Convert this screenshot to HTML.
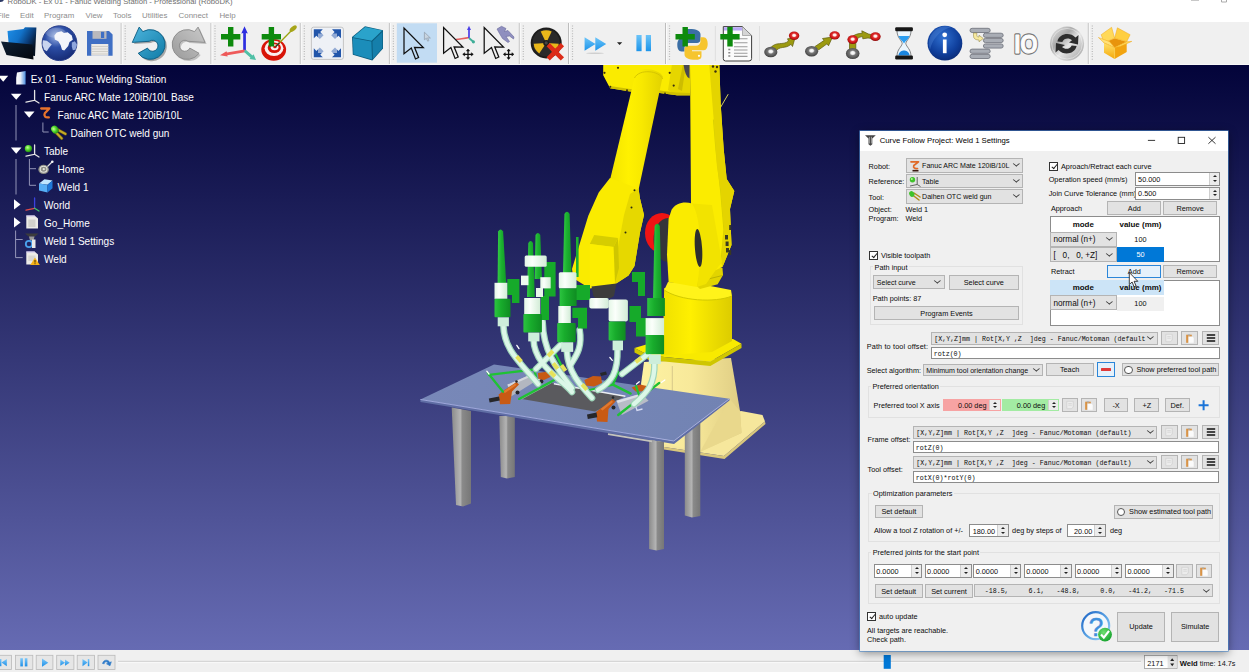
<!DOCTYPE html>
<html><head><meta charset="utf-8"><title>RoboDK - Ex 01 - Fanuc Welding Station - Professional (RoboDK)</title>
<style>
*{box-sizing:border-box;margin:0;padding:0}
html,body{width:1249px;height:672px;overflow:hidden;background:#fff}
body{font-family:"Liberation Sans",sans-serif;font-size:9px;color:#000;position:relative}
.abs{position:absolute}
#titlebar{position:absolute;left:0;top:0;width:1249px;height:23px;background:#fff}
#titletxt{position:absolute;left:7.6px;top:-3.3px;font-size:7.7px;line-height:10px;color:#6e6e6e;white-space:nowrap}
.menu{position:absolute;top:10.7px;font-size:7.9px;line-height:10px;color:#8d8d8d;white-space:nowrap}
#toolbar{position:absolute;left:0;top:22px;width:1249px;height:43px;background:#f0f0f0;border-bottom:1px solid #f8f8f8}
#view{position:absolute;left:0;top:65px;width:1249px;height:585px;background:linear-gradient(#03043a,#666bb3)}
#bottombar{position:absolute;left:0;top:649.5px;width:1249px;height:23px;background:#f0f0f0}
.tree{position:absolute;color:#fff;font-size:10.05px;white-space:nowrap;line-height:18px;height:18px;margin-top:1.2px}
#dlg{position:absolute;left:860px;top:130.5px;width:367.5px;height:520px;background:#f0f0f0;box-shadow:0 0 0 .6px #4a86c8,0 2px 9px rgba(0,0,0,.45)}
#dlgtitle{position:absolute;left:0;top:0;width:100%;height:20px;background:#fff}

#dc{position:absolute;left:0;top:0;width:0;height:0;font-size:7.3px;line-height:10px;color:#0c0c0c;white-space:nowrap}
#dc .l{position:absolute;height:10px;margin-top:.7px}
#dc .cb{position:absolute;background:#e2e2e2;border:1px solid #b4b4b4;padding-left:2.5px;padding-top:.9px;line-height:normal;display:flex;align-items:center;font-size:7.05px}
#dc .cb::after{content:"";position:absolute;right:3.6px;top:50%;width:3.7px;height:3.7px;border-right:.75px solid #3a3a3a;border-bottom:.75px solid #3a3a3a;transform:translateY(-78%) scaleY(.72) rotate(45deg)}
#dc .mono,#dc .cb.mono{font-family:"Liberation Mono",monospace;font-size:6.65px;white-space:pre}
#dc .btn{position:absolute;background:#e2e2e2;border:1px solid #b4b4b4;padding-top:.5px;display:flex;align-items:center;justify-content:center;line-height:normal}
#dc .hot{background:#e5f1fb;border-color:#2b86d9}
#dc .le{position:absolute;background:#fff;border:1px solid #8c8c8c;padding-left:2px;padding-top:1.2px;display:flex;align-items:center;line-height:normal}
#dc .sp{position:absolute;background:#fff;border:1px solid #8c8c8c;padding-left:2px;padding-top:1.2px;display:flex;align-items:center;line-height:normal}
#dc .sp::before{content:"";position:absolute;right:0;top:0;bottom:0;width:9.5px;background:#ececec;border-left:1px solid #cfcfcf}
#dc .sp i{position:absolute;right:2.6px;width:0;height:0;border-left:2.1px solid transparent;border-right:2.1px solid transparent}
#dc .sp i.u{top:calc(50% - 3.6px);border-bottom:2.6px solid #222}
#dc .sp i.d{top:calc(50% + 1px);border-top:2.6px solid #222}
#dc .gb{position:absolute;border:1px solid #e1e1e1}
#dc .gl{position:absolute;background:#f0f0f0;padding:0 1.5px;height:10px;margin-top:.8px}
#dc .ck{position:absolute;width:9px;height:9px;margin:-.3px;background:#fff;border:.8px solid #333}
#dc .ck::after{content:"";position:absolute;left:2.4px;top:.1px;width:2.4px;height:5px;border-right:.8px solid #222;border-bottom:.8px solid #222;transform:rotate(40deg)}
#dc .rd{position:absolute;width:8.4px;height:8.4px;margin:-.2px;border-radius:50%;background:#fff;border:.8px solid #555}
#dc .ib{position:absolute;background:#e2e2e2;border:1px solid #b4b4b4}
#dc .r{justify-content:flex-end}
</style></head>
<body>
<div id="titlebar"><div id="titletxt">RoboDK - Ex 01 - Fanuc Welding Station - Professional (RoboDK)</div></div>
<div id="menubar">
<span class="menu" style="left:-3px">File</span><span class="menu" style="left:20px">Edit</span><span class="menu" style="left:44px">Program</span><span class="menu" style="left:85.6px">View</span><span class="menu" style="left:113px">Tools</span><span class="menu" style="left:142px">Utilities</span><span class="menu" style="left:178.6px">Connect</span><span class="menu" style="left:219.4px">Help</span>
</div>
<div id="toolbar"></div>
<!--TB-->
<svg class="abs" style="left:0;top:0" width="1249" height="66" viewBox="0 0 1249 66">
<defs>
<linearGradient id="tFold" x1="0" y1="0" x2="1" y2=".55"><stop offset="0" stop-color="#1f8fe8"/><stop offset=".45" stop-color="#1272c8"/><stop offset=".75" stop-color="#0a3c78"/><stop offset="1" stop-color="#04101f"/></linearGradient>
<linearGradient id="tFold2" x1="0" y1="0" x2="1" y2="1"><stop offset="0" stop-color="#0f2136"/><stop offset="1" stop-color="#03070d"/></linearGradient>
<radialGradient id="tGlobe" cx=".4" cy=".3" r=".8"><stop offset="0" stop-color="#9db4e4"/><stop offset=".4" stop-color="#2c4ea6"/><stop offset="1" stop-color="#12256c"/></radialGradient>
<linearGradient id="tUndo" x1="0" y1="0" x2="1" y2="1"><stop offset="0" stop-color="#4db4dd"/><stop offset="1" stop-color="#0f7ba6"/></linearGradient>
<linearGradient id="tRedo" x1="0" y1="0" x2="1" y2="1"><stop offset="0" stop-color="#c9c9c9"/><stop offset="1" stop-color="#9a9a9a"/></linearGradient>
<linearGradient id="tFF" x1="0" y1="0" x2="0" y2="1"><stop offset="0" stop-color="#6cc4f8"/><stop offset="1" stop-color="#1c94ea"/></linearGradient>
<radialGradient id="tInfo" cx=".45" cy=".35" r=".75"><stop offset="0" stop-color="#2f6fd0"/><stop offset=".6" stop-color="#0f3f9c"/><stop offset="1" stop-color="#08246a"/></radialGradient>
<linearGradient id="tSilver" x1="0" y1="0" x2="1" y2="1"><stop offset="0" stop-color="#efefef"/><stop offset=".35" stop-color="#a9a9a9"/><stop offset=".55" stop-color="#e6e6e6"/><stop offset="1" stop-color="#9d9d9d"/></linearGradient>
<linearGradient id="tBox" x1="0" y1="0" x2="0" y2="1"><stop offset="0" stop-color="#ffe16a"/><stop offset="1" stop-color="#f4a90c"/></linearGradient>
<radialGradient id="tRed" cx=".5" cy=".45" r=".6"><stop offset="0" stop-color="#fff"/><stop offset=".22" stop-color="#fde4e0"/><stop offset=".42" stop-color="#e03030"/><stop offset=".7" stop-color="#c81414"/><stop offset="1" stop-color="#6e0808"/></radialGradient>
<radialGradient id="tGray" cx=".5" cy=".45" r=".6"><stop offset="0" stop-color="#fff"/><stop offset=".22" stop-color="#efefef"/><stop offset=".4" stop-color="#777"/><stop offset=".75" stop-color="#555"/><stop offset="1" stop-color="#333"/></radialGradient>
<g id="plus"><path d="M7 0H12.4V7H19.3V12.4H12.4V19.5H7V12.4H0V7H7Z" fill="#0d8a0d"/></g>
<g id="cur"><path d="M0 0V25.7L7.3 20L11.5 30.9L14.6 29.4L10.5 19.2L19.3 19.5Z" fill="none" stroke="#111" stroke-width="1.25" stroke-linejoin="miter"/></g>
<g id="mv" stroke="#111" stroke-width="1.3" fill="#111"><path d="M-4.6 0H4.6M0 -4.6V4.6" fill="none"/><path d="M-5.3 0L-3.3 -1.6V1.6ZM5.3 0L3.3 -1.6V1.6ZM0 -5.3L-1.6 -3.3H1.6ZM0 5.3L-1.6 3.3H1.6Z" stroke-width=".5"/></g>
<g id="sep"><path d="M0 23V64" stroke="#bdbdbd" stroke-width="1"/><path d="M1 23V64" stroke="#fbfbfb" stroke-width="1"/><path d="M4 25.5V61" stroke="#b9b9b9" stroke-width="1.2" stroke-dasharray="1 1.55"/></g>
</defs>
<!-- window buttons hints -->
<path d="M1191 .3H1199" stroke="#bbb" stroke-width="1"/><path d="M1221.5 -1H1226.5V2H1221.5Z" fill="none" stroke="#aaa" stroke-width="1"/>
<circle cx=".5" cy="-1.500" r="3.600" fill="#2d3a66"/>
<!-- selected bg -->
<rect x="396.8" y="23.3" width="40.2" height="39.4" fill="#c2dcf3"/>
<!-- separators -->
<use href="#sep" x="121.2"/><use href="#sep" x="211"/><use href="#sep" x="300.3"/><use href="#sep" x="389.4"/><use href="#sep" x="519.3"/><use href="#sep" x="568.5"/><use href="#sep" x="665.5"/><use href="#sep" x="1088.3"/>
<path d="M759.5 26V61M715.300 26V61" stroke="#dedede" stroke-width="1"/>
<!-- folder -->
<path d="M7.5 31L23.5 29L25 27.3L36.4 27.5L35 56L9.5 53Z" fill="url(#tFold)"/>
<path d="M1 41.5L32.5 44.5L33.5 59.5L6.5 55Z" fill="url(#tFold2)"/>
<!-- globe -->
<circle cx="59.5" cy="43.2" r="17.4" fill="url(#tGlobe)" stroke="#2a3f8c" stroke-width="1"/>
<path d="M54.4 35.6L56.7 32.5L61.4 31.2L64.0 33.0L67.6 32.3L71.8 35.6L72.8 39.8L69.5 42.1L68.2 46.0L64.3 50.4L62.0 49.8L60.6 45.0L58.3 41.3L54.8 39.6Z" fill="#f3f5fb"/>
<path d="M42.9 40.3L46.8 40.8L51.8 44.5L48.9 48.1L46.8 51.2L44.2 49.7L42.5 45.0Z" fill="#c9d4ee"/>
<path d="M71.8 42.4L74.9 41.3L77.0 44.5L75.4 49.7L72.8 50.2L71.8 46.5Z" fill="#8fa6dc"/>
<ellipse cx="56" cy="33" rx="10" ry="5" fill="#fff" opacity=".18"/>
<!-- floppy -->
<path d="M87 31H109L112.6 34.5V55.8H87Z" fill="#3f6fc4"/>
<path d="M92.5 31H106.5V38.8H92.5Z" fill="#b9b9bd"/><path d="M101 31.8H104.2V38H101Z" fill="#3f6fc4"/>
<path d="M91.3 44H108.3V55.8H91.3Z" fill="#eceae6"/><path d="M91.3 46.5H108.3M91.3 49H108.3M91.3 51.5H108.3M91.3 54H108.3" stroke="#c9c6c0" stroke-width=".8"/>
<!-- undo -->
<path id="undoP" d="M139.2 27.1L142.8 31.6A14.9 14.9 0 1 1 138.2 53.3L147.5 48.1A5.5 5.5 0 1 0 149.3 41.3L132.3 42.4Z" fill="none"/>
<path d="M139.2 27.1L142.8 31.6A14.9 14.9 0 1 1 138.2 53.3L147.5 48.1A5.5 5.5 0 1 0 149.3 41.3L132.3 42.4Z" fill="#6b6b6b" opacity=".55" transform="translate(1.7 1.7)"/>
<path d="M139.2 27.1L142.8 31.6A14.9 14.9 0 1 1 138.2 53.3L147.5 48.1A5.5 5.5 0 1 0 149.3 41.3L132.3 42.4Z" fill="url(#tUndo)" stroke="#0b5a80" stroke-width=".9" stroke-linejoin="round"/>
<!-- redo -->
<g transform="translate(337.3 0) scale(-1 1)"><path d="M139.2 27.1L142.8 31.6A14.9 14.9 0 1 1 138.2 53.3L147.5 48.1A5.5 5.5 0 1 0 149.3 41.3L132.3 42.4Z" fill="#777" opacity=".4" transform="translate(-1.6 1.6)"/><path d="M139.2 27.1L142.8 31.6A14.9 14.9 0 1 1 138.2 53.3L147.5 48.1A5.5 5.5 0 1 0 149.3 41.3L132.3 42.4Z" fill="url(#tRedo)" stroke="#8a8a8a" stroke-width=".9" stroke-linejoin="round"/></g>
<!-- add frame -->
<path d="M243.2 33V50.5H245.9V33L247.8 33.5L244.5 26.2L241.3 33.5Z" fill="#2d2ee0"/>
<path d="M244.6 49.6L227 52.6L226.5 51.2L220 55.2L227.6 56.6L227.3 55.2L245 52.2Z" fill="#ee5a5a"/>
<path d="M243.8 51.8L250.5 57.8L249.5 58.9L256 60L253.6 54.2L252.5 55.5L245.8 49.7Z" fill="#4fc0a6"/>
<use href="#plus" x="221" y="27"/>
<!-- add target -->
<ellipse cx="273.7" cy="49.8" rx="12.4" ry="10.9" fill="#d81408"/>
<ellipse cx="274" cy="48.3" rx="9.4" ry="7.6" fill="#fbeeee"/>
<ellipse cx="274.3" cy="47.8" rx="6.6" ry="5.2" fill="#d81408"/>
<ellipse cx="274.6" cy="47.3" rx="3.9" ry="3" fill="#fbeeee"/>
<ellipse cx="274.9" cy="47" rx="1.7" ry="1.3" fill="#d81408"/>
<path d="M275.5 46.8L291.5 30.5" stroke="#9aa30e" stroke-width="1.3"/><path d="M275.5 46.8L279.5 42.7" stroke="#333" stroke-width="1.3"/>
<ellipse cx="293.2" cy="28.6" rx="4.3" ry="2.2" fill="#a7a51a" transform="rotate(-42 293.2 28.6)"/>
<use href="#plus" x="261.7" y="27"/>
<!-- fit -->
<rect x="311.4" y="27.2" width="32" height="32.2" rx="2.2" fill="#eef1f6" stroke="#b9b9b9" stroke-width=".8"/>
<g fill="#2256aa"><path d="M313.8 29.3H322.8L320.2 31.9L323.6 35.3L319.8 39.100L316.4 35.7L313.8 38.3Z"/><path d="M341 29.3H332L334.600 31.900L331.200 35.300L335 39.100L338.400 35.700L341 38.300Z"/><path d="M313.8 57.300H322.800L320.200 54.700L323.600 51.300L319.800 47.500L316.400 50.900L313.800 48.300Z"/><path d="M341 57.300H332L334.600 54.700L331.200 51.300L335 47.500L338.400 50.900L341 48.300Z"/></g>
<rect x="318" y="33.500" width="19" height="19.500" fill="#eef1f6" opacity=".55"/>
<!-- cube -->
<path d="M352 37L365 26.200L383 30.200V48.500L372.300 60.500L352.800 54.800Z" fill="#0b5c7e"/>
<path d="M352.800 37.200L365.200 27L382.200 30.600L371.600 40.800Z" fill="#2aa3cb"/>
<path d="M352.800 38L371.400 41.600L372 59.400L353.500 54.200Z" fill="#1b8dba"/>
<path d="M372.400 41.400L382.400 31.700V48.200L372.900 59Z" fill="#157fab"/>
<!-- cursors -->
<use href="#cur" x="404" y="28.100"/>
<path d="M424.400 32.200V39.800L426.300 38.300L427.700 41.200L428.900 40.600L427.600 37.900L430.400 38Z" fill="#c9d5e0" stroke="#8c99a8" stroke-width=".7"/>
<path d="M456 39.500C460 38.500 464 38.800 469 37.500" stroke="#e46060" stroke-width="1.500" fill="none"/><path d="M469 28V38" stroke="#4a3ee8" stroke-width="1.700"/><path d="M469 25.800L467 30H471Z" fill="#4a3ee8"/><path d="M469 38L473 41.500" stroke="#3fae98" stroke-width="1.800"/><circle cx="473.400" cy="41.800" r="1.600" fill="#3fae98"/>
<use href="#cur" x="443.600" y="27.600"/>
<use href="#mv" x="468" y="54.300"/>
<path d="M497 29L501.500 26.300L506 28.500L504.500 31.500L508 30.500L514 37L513.500 39L509.500 36L506 36.500L509.500 41.500L508 42.500L502.500 38.500L499.500 33.500Z" fill="#8f8fbf" stroke="#6a6a9c" stroke-width=".6"/>
<use href="#cur" x="484.200" y="27.600"/>
<use href="#mv" x="508.600" y="54.300"/>
<!-- radiation -->
<circle cx="546.200" cy="42.900" r="15.500" fill="#1c1c1c"/><circle cx="546.200" cy="42.900" r="13.600" fill="#2a2a2a"/>
<g fill="#e9b71a"><path d="M546.200 42.900L540.700 31.600A12.600 12.600 0 0 1 551.700 31.600Z"/><path d="M546.200 42.900L533.700 43.800A12.600 12.600 0 0 0 539.200 53.400Z"/><path d="M546.200 42.900L558.700 43.800A12.600 12.600 0 0 1 553.200 53.400Z"/></g>
<circle cx="546.200" cy="42.900" r="3" fill="#1c1c1c"/><circle cx="546.200" cy="42.900" r="1.600" fill="#444"/>
<path d="M549.800 46.300L560.800 57.300M560.800 46.300L549.800 57.300" stroke="#dc2c18" stroke-width="4.600" stroke-linecap="square"/>
<!-- ff -->
<path d="M584.600 37.200L595.500 44L584.600 50.800Z M595.300 37.200L606.200 44L595.300 50.800Z" fill="url(#tFF)"/>
<ellipse cx="595" cy="53.300" rx="9" ry=".7" fill="#cfcfcf"/>
<path d="M617 42.200H622.200L619.600 45Z" fill="#222"/>
<rect x="636.400" y="35" width="5.200" height="16.200" fill="url(#tFF)"/><rect x="645.800" y="35" width="5.200" height="16.200" fill="url(#tFF)"/>
<!-- python -->
<path d="M686 27.500C680 27.500 680.500 30 680.500 33V36H690V37H678C675.500 37 674.300 40 674.300 43.500C674.300 47 675.500 50 678.500 50H681.500V46C681.500 43.500 683.500 41.500 686 41.500H694C696 41.500 697.500 40 697.500 38V33C697.500 29.500 694 27.500 686 27.500Z" fill="#3b6ea5" transform="translate(3 1.500)"/>
<path d="M695.500 59.800C701.500 59.800 701 57.300 701 54.300V51.300H691.500V50.300H703.500C706 50.300 707.200 47.300 707.200 43.800C707.200 40.300 706 37.300 703 37.300H700V41.300C700 43.800 698 45.800 695.500 45.800H687.500C685.500 45.800 684 47.300 684 49.300V54.300C684 57.800 687.500 59.800 695.500 59.800Z" fill="#f6c52f" transform="translate(.5 0)"/>
<circle cx="699" cy="55.800" r="1.100" fill="#fff"/>
<use href="#plus" x="675.500" y="27"/>
<!-- add program doc -->
<path d="M723.300 26.600H742.500L751.600 35.500V58.500Q751.600 61 749 61H725.500Q723.300 61 723.300 58.500Z" fill="#fbfbfb" stroke="#3c3c3c" stroke-width="1"/>
<path d="M742.500 26.600V35.500H751.600Z" fill="#d5d5d5" stroke="#888" stroke-width=".6"/>
<path d="M724 27.300H742L742.300 30.500H724Z" fill="#b7a8f6"/>
<path d="M734 38.800H747.500M734 42.800H747.500M734 46.800H747.500M734 50H747.500M734 53.200H747.500M734 56.400H747.500" stroke="#9c9c9c" stroke-width="1.100"/>
<path d="M728.300 49.500H730.300M728.300 52.800H730.300M728.300 56H730.300" stroke="#888" stroke-width="1.400"/>
<use href="#plus" x="720.300" y="27"/>
<!-- moveJ -->
<path d="M770 48.500C776 40.500 783 46 788.500 41L787.500 38.800L795 38L792.500 46.500L791 44.300C785 49.500 780 45 775 52Z" fill="#9c9a10" stroke="#5d5c0a" stroke-width=".7"/>
<ellipse cx="770.800" cy="52" rx="6.600" ry="5.200" fill="url(#tGray)"/><ellipse cx="794.100" cy="35.800" rx="5.200" ry="4.200" fill="url(#tRed)"/>
<!-- moveL -->
<path d="M815 46.500L824 40.500L822.500 38.500L832.500 37L828.500 45.800L827 43.800L818.500 50Z" fill="#9c9a10" stroke="#5d5c0a" stroke-width=".7"/>
<ellipse cx="811.600" cy="51.200" rx="6.600" ry="5.200" fill="url(#tGray)"/><ellipse cx="834.700" cy="35.400" rx="5.200" ry="4.200" fill="url(#tRed)"/>
<!-- moveC -->
<path d="M849.500 50V41C851 36 856 33.500 862.200 33.300L861.800 30.800L868.500 34L875 35.500V39L868 38L862.800 38.800L862.600 36.600C858.500 37 856 39 855.800 43V50Z" fill="#9c9a10" stroke="#5d5c0a" stroke-width=".7"/>
<ellipse cx="852.700" cy="53.500" rx="6.800" ry="5.600" fill="url(#tGray)"/><ellipse cx="852.700" cy="39.600" rx="5.300" ry="4.300" fill="url(#tRed)"/><ellipse cx="875.400" cy="36.600" rx="5.300" ry="4.300" fill="url(#tRed)"/>
<!-- hourglass -->
<path d="M897 30.500H911C911 38 906.300 40 905.800 43.500C906.300 47 911 49 911 56.500H897C897 49 901.700 47 902.200 43.500C901.700 40 897 38 897 30.500Z" fill="#eaf5fd" stroke="#555" stroke-width=".7"/>
<path d="M898.500 36H909.500C908.500 39.500 905 41 904 43.500C903 41 899.500 39.500 898.500 36Z" fill="#2a9df0"/>
<path d="M898.300 55.500C899 51.500 902 50.500 904 50.500C906 50.500 909 51.500 909.700 55.500Z" fill="#1a86e0"/>
<rect x="895.200" y="27.300" width="17.700" height="3.900" rx="1.200" fill="#161616"/><rect x="895.200" y="55.600" width="17.700" height="3.900" rx="1.200" fill="#161616"/>
<!-- info -->
<circle cx="944.900" cy="43.200" r="17.400" fill="url(#tInfo)"/>
<path d="M930 50A17.400 17.400 0 0 1 951 27A30 30 0 0 0 930 50Z" fill="#5a8ee0" opacity=".35"/>
<circle cx="944.700" cy="34.800" r="2.400" fill="#fff"/><rect x="942.900" y="39.500" width="3.700" height="13.700" fill="#fff"/>
<!-- subprogram -->
<g fill="#a9adb5" stroke="#6b6f78" stroke-width=".8"><rect x="970" y="28.300" width="20.200" height="4.200" rx="2.100"/><rect x="983.400" y="33.200" width="19.800" height="4.200" rx="2.100"/><rect x="983.400" y="38.400" width="19.800" height="4.200" rx="2.100"/><rect x="983.400" y="43.900" width="19.800" height="4.200" rx="2.100"/><rect x="970" y="49.100" width="20.200" height="4.200" rx="2.100"/><rect x="970" y="54.300" width="20.200" height="4.200" rx="2.100"/></g>
<path d="M973.500 33V36C973.500 39 976 40 979 40V41.800L983.300 38.500L979 35.200V37C977.500 37 976.800 36.500 976.800 35.500V33Z" fill="#f6e9a0" stroke="#8c7f3a" stroke-width=".5"/>
<!-- IO -->
<text x="1014.200" y="52.900" font-family="Liberation Sans,sans-serif" font-size="25.500" font-weight="bold" fill="#777" stroke="#777" stroke-width="3.300" stroke-linejoin="round" textLength="23.500" lengthAdjust="spacingAndGlyphs">IO</text><text x="1014.200" y="52.900" font-family="Liberation Sans,sans-serif" font-size="25.500" font-weight="bold" fill="#fcfcfc" stroke="#fcfcfc" stroke-width=".900" stroke-linejoin="round" textLength="23.500" lengthAdjust="spacingAndGlyphs">IO</text>
<!-- refresh -->
<circle cx="1067" cy="43.700" r="17.100" fill="url(#tSilver)"/>
<circle cx="1067" cy="43.700" r="15.300" fill="none" stroke="#fff" stroke-width=".8" opacity=".5"/>
<g fill="#2e2e2e"><path d="M1057.400 41.500C1059 33.500 1070 31.500 1075.500 37.500L1078.500 35L1078 44.500L1069 42.500L1072 40.300C1069 37.500 1064 38 1062.300 42Z"/><path d="M1076.600 45.900C1075 53.900 1064 55.900 1058.500 49.900L1055.500 52.400L1056 42.900L1065 44.900L1062 47.100C1065 49.900 1070 49.400 1071.700 45.400Z"/></g>
<!-- box -->
<path d="M1104 42.800L1114.600 38.200L1126.700 41.700L1114.600 47.500Z" fill="#e8940c"/>
<path d="M1104 42.800L1101.200 34.700L1111.600 27.300L1114.600 38.200Z" fill="#ffd95a" stroke="#f0a818" stroke-width=".5"/>
<path d="M1114.600 38.200L1117.400 27.800L1130.100 34.700L1126.700 41.700Z" fill="#ffcf40" stroke="#f0a818" stroke-width=".5"/>
<path d="M1104 42.800L1114.600 47.500V59L1104 52.800Z" fill="url(#tBox)"/>
<path d="M1114.600 47.500L1126.700 41.700V52L1114.600 59Z" fill="#f2a410"/>
<path d="M1114.600 47.500V59" stroke="#ffd24a" stroke-width=".6"/>
<path d="M1104 42.800L1098.400 37.500L1109.500 41.600L1114.600 47.500Z" fill="#ffe27a" stroke="#f0a818" stroke-width=".5"/>
<path d="M1126.700 41.700L1131.800 41.400L1120 46.500L1114.600 47.500Z" fill="#ffd95a" stroke="#f0a818" stroke-width=".5"/>
</svg>
<!--/TB-->
<div id="view"></div>
<!--SCENE-->
<svg class="abs" style="left:400px;top:65px" width="460" height="585" viewBox="400 65 460 585">
<defs>
<linearGradient id="sRod" x1="0" x2="1"><stop offset="0" stop-color="#34cc46"/><stop offset=".45" stop-color="#1cb230"/><stop offset="1" stop-color="#129a26"/></linearGradient>
<linearGradient id="sBody" x1="0" x2="1"><stop offset="0" stop-color="#2cc440"/><stop offset=".4" stop-color="#18ac2c"/><stop offset="1" stop-color="#0f8c22"/></linearGradient>
<linearGradient id="sWhite" x1="0" x2="1"><stop offset="0" stop-color="#e4f7e6"/><stop offset=".35" stop-color="#fbfffb"/><stop offset="1" stop-color="#d2ecd6"/></linearGradient>
<linearGradient id="sLeg" x1="0" x2="1"><stop offset="0" stop-color="#8b8b8b"/><stop offset=".45" stop-color="#b4b4b4"/><stop offset=".55" stop-color="#8a8a8a"/><stop offset="1" stop-color="#777"/></linearGradient>
<linearGradient id="sFore" x1="0" x2="1"><stop offset="0" stop-color="#f3e400"/><stop offset=".35" stop-color="#fff100"/><stop offset=".6" stop-color="#f8e900"/><stop offset="1" stop-color="#e2d200"/></linearGradient>
<linearGradient id="sCyl" x1="0" x2="1"><stop offset="0" stop-color="#efe000"/><stop offset=".4" stop-color="#fff000"/><stop offset="1" stop-color="#dccc00"/></linearGradient>
<linearGradient id="sPed" x1="0" x2="1"><stop offset="0" stop-color="#fdf2a2"/><stop offset=".5" stop-color="#f8e99a"/><stop offset="1" stop-color="#dfcd84"/></linearGradient>
<linearGradient id="sTop" x1="0" x2="1"><stop offset="0" stop-color="#7888b8"/><stop offset="1" stop-color="#7283b3"/></linearGradient>
<g id="hoseS" fill="none" stroke-linecap="round"></g>
</defs>
<!-- pedestal floor plate -->
<path d="M650 432L741 411L762.5 415L765 421.500L724 456L664 447Z" fill="#f6e79c"/>
<path d="M765 421.500L724 456L664 447L664 449.500L724.500 459L765.500 424Z" fill="#d9c77c"/>
<!-- pedestal body -->
<path d="M644 362L731 358L740 411L741.500 433L700 452L650 440L641 384Z" fill="url(#sPed)"/>
<path d="M672.300 366V392" stroke="#d8c88a" stroke-width="1"/>
<path d="M700 452L741.500 433L740 411L729.500 398.700Z" fill="#e9d88c"/>
<!-- robot base plate -->
<path d="M634.500 348L668 338L733 339L741.500 343.700L710.300 361.500L649.300 355.600Z" fill="#f8ea00"/>
<path d="M634.500 348L649.300 355.600L710.300 361.500L741.500 343.700V348L710.300 366L649 360L634.500 352.600Z" fill="#cfc600"/>
<!-- base cylinder -->
<path d="M664.200 288L732 296V341L712 352L662.700 355.600Z" fill="url(#sCyl)"/>
<path d="M664.200 290C680 301 715 303 732 296L731 290L700 284L668 282Z" fill="#fff31a"/>
<path d="M664.200 290C680 301 715 303 732 296" stroke="#d2c900" stroke-width="1" fill="none"/>
<!-- neck -->
<path d="M697 266L722.500 268L723 275L717.700 284.200L700 289L690 280Z" fill="#e2d400"/>
<path d="M700 281L722.500 275.500" stroke="#bdb400" stroke-width="1"/>
<!-- upper arm -->
<path d="M690 64L719.300 64L720.700 104.600L723.700 149.300L726.700 179L734.300 191L730 209L731.500 245L722.500 267L716 270L694 274L691 203Z" fill="#fbec00"/>
<path d="M713.500 119.500L716 150L720.700 191L724 230L721 262" stroke="#d9d000" stroke-width="1.200" fill="none"/>
<path d="M714.500 119L719 110L728.200 94.200" stroke="#eee65a" stroke-width=".9" fill="none"/>
<path d="M709.200 64L719.300 64L720.700 104.600L723.700 149.300L726.700 179L734.300 191L730 209L731.500 245L722.500 267L721 262L724 230L720.700 191L716.900 166L713.800 120.800Z" fill="#e4d400"/><g fill="#3a2f10"><circle cx="713" cy="66.500" r="1.200"/><circle cx="717" cy="67" r="1.200"/><circle cx="715.500" cy="71.500" r="1.200"/></g>
<g fill="#3a3a20"><rect x="725" y="235" width="3" height="4.500"/><rect x="725.600" y="241.500" width="3" height="4.500"/><rect x="726" y="248" width="3" height="4.500"/><rect x="729.200" y="225" width="2" height="5"/><rect x="729.200" y="250" width="2" height="5"/></g>
<!-- red motor -->
<ellipse cx="662" cy="233" rx="17" ry="20" fill="#f01414"/>
<ellipse cx="668" cy="240" rx="14.500" ry="22" fill="#35353a"/>
<!-- J2 housing -->
<path d="M671.600 209.800C676 203 684 201 692 203.500L700 230L701 266L697 287L668.600 282L667 254.400L668.600 218.700Z" fill="#faeb00"/>
<path d="M692 203.500C700 215 703 250 697 287L706 284L716.500 269L722 262L712 205Z" fill="#f2e300"/>
<ellipse cx="698.500" cy="248" rx="3.600" ry="19" fill="#2e2e2e" transform="rotate(-4 698.500 248)"/>
<!-- J3 housing -->
<path d="M603.200 64L690 64L690 95.300L676.700 95.300L659.700 93L630.200 91.400L610.100 88.300L603.200 75.200Z" fill="#faeb00"/>
<path d="M672 64L690 64V95.300L676.700 95.300L668 90Z" fill="#e6d600"/>
<path d="M678 89L683 64H686L682 91Z" fill="#cdbd00"/>
<path d="M683.500 64H689.500V78.500Q685 77 683.500 64Z" fill="#484852"/>
<path d="M610.100 88.300L630.200 91.400L659.700 93L676.700 95.300L690 95.300V93L676.500 92.500L659.700 90.500L630.200 89L610 86Z" fill="#cfc000"/>
<g fill="#3a2f10"><circle cx="618" cy="67.800" r="1.100"/><circle cx="604.500" cy="72.800" r="1.100"/><circle cx="610.300" cy="86.800" r="1"/><circle cx="627" cy="90.300" r="1"/><circle cx="669.700" cy="72.800" r="1.100"/><circle cx="673.700" cy="85.600" r="1.100"/><circle cx="665" cy="93.300" r=".9"/></g>
<!-- forearm -->
<path d="M635.900 72C640 66.500 659 69 662.700 76.400L638.500 190L610 180Z" fill="url(#sFore)"/>
<path d="M634.500 78C639 68.500 659.500 70.500 662.700 79" stroke="#d6c600" stroke-width="1" fill="none"/>
<!-- wrist housing -->
<path d="M610 178L638.500 188.500L640 198.500L644 215L640 232.600L634.500 266L628.500 275.500L615 284.200L589.800 288.600L573.400 278.200L572 269L588.300 215.700L598.700 192.400Z" fill="#faeb00"/>
<path d="M638.500 188.500L640 198.500L644 215L640 232.600L634.500 266L628.500 275.500L615 284.200L618 247L624 215L630 194Z" fill="#e6d800"/>
<path d="M594.200 235L618 238L613.600 247L589.800 244Z" fill="#d6cd00"/>
<path d="M589.800 244L613.600 247L615 283L589.800 287Z" fill="#fcee00"/>
<path d="M613.600 247L618 238L619 268L615 283Z" fill="#cfc600"/>
<g fill="#2b2b10"><circle cx="634.500" cy="190.300" r="1"/><circle cx="631.500" cy="207.500" r="1"/><circle cx="625.500" cy="232.500" r="1"/></g>
<!-- flange -->
<path d="M591.500 286.500L616.500 283.500L614 296L611 298L596 298.500L593.500 296.500Z" fill="#3c3c3c"/>
<!-- table legs back -->
<path d="M499.300 416H514.800V477L507 478.500L500.800 477Z" fill="url(#sLeg)"/>
<path d="M684.800 430L700.300 423V516L692 517.500L684.800 515.400Z" fill="url(#sLeg)"/>
<!-- table top -->
<path d="M420.400 399.500L494 364.500L729.500 398.700L673.800 441Z" fill="url(#sTop)"/>
<path d="M420.400 399.500L673.800 441L729.500 398.700V400.500L674 444L420.400 402Z" fill="#5f6da4"/>
<path d="M420.400 399.500L673.800 441L729.500 398.700" stroke="#a6afe2" stroke-width=".9" fill="none"/>
<!-- legs front -->
<path d="M451.700 407.500L471 411V503.500L463 506.500L456 505Z" fill="url(#sLeg)"/>
<path d="M649.100 440L664 442V549L656.500 550.500L649.100 549Z" fill="url(#sLeg)"/>
<path d="M608 434.200L652 441.300" stroke="#c4c4bc" stroke-width="1.700"/>
<!-- workpiece -->
<path d="M507.500 384.600L531.600 374L534.300 382L510.200 397Z" fill="#b3b7c0"/>
<path d="M507.500 384.600L531.600 374L532.300 376L508.200 386.800Z" fill="#d4d7de"/>
<path d="M521.800 399L551.300 382.900L625.400 396.300L595 411.400Z" fill="#5a5a5e"/>
<path d="M553.900 383.800L625.400 396.300" stroke="#eceef4" stroke-width="1.500"/>
<path d="M616.400 400.700L641.400 393.600L648.600 400.700L621.800 415Z" fill="#b8bcc6"/>
<path d="M616.400 400.700L641.400 393.600L643 395.200L618 403Z" fill="#dcdfe6"/>
<path d="M521.800 399L551.300 382.900" stroke="#8fd08f" stroke-width=".8"/>
<!-- clamps -->
<g fill="#c85a14"><path d="M498.600 394.500L506 389L516.500 382L519 384.500L512 391.500L510.200 404L500 404.300Z"/><path d="M537.900 373L548 371.500L550.400 377L544 380L538.500 379.500Z"/><path d="M584.300 380L593 376L601 376.500L602 383L594 386.400L586 385.500Z"/><path d="M596 412L604 406L612.500 399L615.500 401.500L608.500 409L607.500 422L597 421.500Z"/><path d="M631.600 387.500L640 384.600L646.800 386L645 391L636 391.800Z"/></g>
<g fill="#e07a30"><path d="M503 391.500L515 383.500L516.500 385L505 393Z"/><path d="M600.500 409L611.500 400.500L613 402L602.500 410.500Z"/></g>
<g fill="#26262a"><path d="M488.800 398.500L499 396.600L499.800 400.600L489.600 402.400Z"/><path d="M587 414.500L596.500 412.500L597.300 417.300L587.800 419Z"/><circle cx="517.500" cy="392.500" r="2"/><circle cx="541.500" cy="381.500" r="1.900"/><circle cx="613.500" cy="407.500" r="2"/><path d="M600 373L606 371.500L607 374.500L601 376Z"/><circle cx="516.500" cy="381.500" r="1.300"/><circle cx="613" cy="397.500" r="1.300"/></g>
<!-- green path lines -->
<g stroke="#1fc234" stroke-width="2.300" fill="none" stroke-linecap="round" stroke-linejoin="round"><path d="M487.900 373L503 391.800"/><path d="M489 374.800L534.300 369.500L537 381"/><path d="M519.100 398.900L553.900 380.200"/><path d="M555.700 354.300L562.900 368.600"/><path d="M589.600 390L612.900 384.600L630.700 393.600"/><path d="M612.900 384.600L618.200 372"/><path d="M618.200 415L659.300 382.900"/><path d="M636 386L640 398"/></g>
<g stroke="#fff" stroke-width="1.300" stroke-linecap="round"><path d="M486.800 371.200L489 374"/><path d="M516.800 345.400L519 348.600"/><path d="M536.500 381.500L539 379.500"/><path d="M609.900 357.500L612.300 360.300"/><path d="M636.500 384L639.300 381.800"/><path d="M661.300 382.500L664.800 380"/></g>
<path d="M635.500 405.500L637 410.500L642.500 409" stroke="#d5daf2" stroke-width="1.300" fill="none"/>
<!-- hoses -->
<g fill="none" stroke-linecap="round">
<g stroke="#9ed4b8" stroke-width="6.600"><path d="M503.300 325C504 350 520 362 538 384"/><path d="M533.500 339C534 365 560 378 572 392"/><path d="M542.700 322C543 350 556 368 572 388"/><path d="M579.700 330C583 350 574 358 570 366"/><path d="M566.800 351C568 372 580 385 592 398"/><path d="M617.500 349C618 372 612 382 598 390"/><path d="M654.400 362C655 384 648 392 634 404"/><path d="M560.400 345L536 369"/><path d="M648 354L622 374"/></g>
<g stroke="#dcf7e8" stroke-width="4.300"><path d="M503.300 325C504 350 520 362 538 384"/><path d="M533.500 339C534 365 560 378 572 392"/><path d="M542.700 322C543 350 556 368 572 388"/><path d="M579.700 330C583 350 574 358 570 366"/><path d="M566.800 351C568 372 580 385 592 398"/><path d="M617.500 349C618 372 612 382 598 390"/><path d="M654.400 362C655 384 648 392 634 404"/><path d="M560.400 345L536 369"/><path d="M648 354L622 374"/></g>
</g>
<g fill="#e6e25a"><rect x="515.500" y="357" width="7" height="4" transform="rotate(48 519 359)"/><rect x="547" y="351.500" width="7" height="4" transform="rotate(-45 550.500 353.500)"/><rect x="552" y="364" width="7" height="4" transform="rotate(50 555.500 366)"/><rect x="549" y="372" width="7" height="4" transform="rotate(45 552.500 374)"/><rect x="560" y="366" width="7" height="4" transform="rotate(55 563.500 368)"/><rect x="581" y="385" width="7" height="4" transform="rotate(48 584.500 387)"/><rect x="635" y="358" width="7" height="4" transform="rotate(-38 638.500 360)"/></g>
<!-- brackets -->
<g fill="#16aa2a"><path d="M507.300 279H519.400V303H512V295H507.300Z"/><path d="M544.300 262H555.600V296.500H549V320H541V296H544.300Z"/><path d="M572.400 307.700H587V328.600H578V318H572.400Z"/><path d="M629.500 306H641V318H647.200V336.600H636V322H629.500Z"/><path d="M575 285H590V300H575Z"/><path d="M632 272H645V296H638V282H632Z"/></g>
<!-- guns -->
<!-- R5 thin behind -->
<rect x="576" y="237" width="2.600" height="40" fill="#1cb230"/>
<!-- G1 -->
<path d="M498.100 231.500Q500.600 227.500 503.100 231.500L506.200 283H497.600Z" fill="url(#sRod)"/>
<rect x="494.500" y="282.800" width="12.800" height="16.100" fill="url(#sWhite)"/>
<rect x="494.500" y="298.800" width="16" height="18.500" rx="1" fill="url(#sBody)"/>
<rect x="497.700" y="317.300" width="11.200" height="9" fill="#cdeedb"/>
<!-- G3/R3 upper -->
<path d="M535.500 235Q537.900 231 540.300 235L542 279H534.600Z" fill="url(#sRod)"/>
<path d="M528.300 243Q530.600 239 533 243L534.800 297H527Z" fill="url(#sRod)"/>
<rect x="524.700" y="255.500" width="22" height="11.200" rx="1.500" fill="url(#sWhite)"/>
<rect x="521" y="275.600" width="7.500" height="9.600" fill="#eefaf0"/>
<rect x="540.300" y="277.200" width="10.400" height="11.200" fill="url(#sWhite)"/>
<rect x="536" y="288" width="7" height="9" fill="#e8f8ea"/>
<!-- G2 -->
<rect x="524.200" y="298" width="16.100" height="16.100" fill="url(#sWhite)"/>
<rect x="523.400" y="314.100" width="18.500" height="18.500" rx="1" fill="url(#sBody)"/>
<rect x="528.200" y="332.600" width="11.300" height="8.800" fill="#cdeedb"/>
<!-- G4/R4 -->
<path d="M564.400 214Q567 209.500 569.600 214L571.500 273H563Z" fill="url(#sRod)"/>
<rect x="558.800" y="272.300" width="17.700" height="16.100" rx="1.500" fill="url(#sWhite)"/>
<rect x="559.600" y="288.400" width="17" height="17.600" fill="url(#sBody)"/>
<rect x="558.300" y="306" width="12.500" height="17" fill="url(#sWhite)"/>
<rect x="557.200" y="323" width="18.500" height="19.300" rx="1" fill="url(#sBody)"/>
<rect x="561.200" y="342.300" width="12" height="9.600" fill="#cdeedb"/>
<!-- G5 robot gun -->
<rect x="589.300" y="298" width="19.500" height="10.500" rx="2" fill="url(#sWhite)"/>
<rect x="608.600" y="299.600" width="19.300" height="21.800" rx="2" fill="url(#sWhite)"/>
<rect x="608.600" y="321.400" width="17" height="19.200" rx="1" fill="url(#sBody)"/>
<rect x="612.600" y="340.600" width="10.400" height="9.700" fill="#cdeedb"/>
<!-- G6 right -->
<path d="M654.600 226Q657.200 221.500 659.800 226L661.800 300H653Z" fill="url(#sRod)"/>
<rect x="647.200" y="298" width="17.700" height="18" fill="url(#sBody)"/>
<rect x="645.600" y="318.100" width="18.500" height="17" fill="url(#sWhite)"/>
<rect x="645.600" y="335" width="18.500" height="19.300" rx="1" fill="url(#sBody)"/>
<rect x="648.800" y="354.300" width="12" height="9.700" fill="#cdeedb"/>
</svg>
<!--/SCENE-->
<!--TREE-->
<svg class="abs" style="left:0;top:65px" width="230" height="210" viewBox="0 65 230 210">
<defs>
<linearGradient id="gdoc" x1="0" x2="1"><stop offset="0" stop-color="#fff"/><stop offset=".45" stop-color="#e8eef8"/><stop offset="1" stop-color="#4d8fe0"/></linearGradient>
<linearGradient id="gcube" x1="0" y1="0" x2="1" y2="1"><stop offset="0" stop-color="#8fd0ff"/><stop offset="1" stop-color="#1c6fd6"/></linearGradient>
<radialGradient id="gball" cx=".4" cy=".35" r=".7"><stop offset="0" stop-color="#c8ff9a"/><stop offset=".5" stop-color="#4fd628"/><stop offset="1" stop-color="#1d7d10"/></radialGradient>
</defs>
<g stroke="#a9abc9" stroke-width="1" fill="none" opacity=".85">
<path d="M16 105V140.5"/><path d="M42.9 122.5V132H48.7"/>
<path d="M16 159V194.5"/><path d="M29.4 159V185.3H36M29.4 168.7H36"/>
<path d="M15.6 230.5V257.6H22.7M15.6 239.5H22.7"/>
</g>
<g fill="#fff">
<path d="M-1.8 75.8H8.2L3.2 81.8Z"/>
<path d="M10.9 93.7H21.5L16.2 99.8Z"/>
<path d="M23.9 111.6H34.5L29.2 117.7Z"/>
<path d="M10.9 147.6H21.5L16.2 153.7Z"/>
<path d="M14 199.3L20.6 204.4L14 209.5Z"/>
<path d="M14 217.3L20.6 222.4L14 227.5Z"/>
</g>
<!-- station icon -->
<path d="M17 72.5L25.6 71V84.5H16.2V78Z" fill="url(#gdoc)"/>
<!-- frame icon white -->
<g stroke="#e6e6e6" stroke-width="1.3" fill="none" stroke-linecap="round"><path d="M34.6 90.5V100.3L26 102.2M34.6 100.3L39 103"/></g>
<!-- robot icon orange -->
<g stroke="#e8732c" stroke-width="2.300" fill="none" stroke-linecap="round" stroke-linejoin="round"><path d="M41.200 108.500H49.300L44.800 113.300C43.600 115.800 45.200 117.800 48.800 117.300"/></g>

<!-- tool icon -->
<g><path d="M56 132.500L61.700 138.400" stroke="#6a5a10" stroke-width="3.200" stroke-linecap="round"/><path d="M58 129.800L65.400 133.900" stroke="#6a5a10" stroke-width="3.200" stroke-linecap="round"/><path d="M56 132.500L61.700 138.400" stroke="#c4aa28" stroke-width="2" stroke-linecap="round"/><path d="M58 129.800L65.400 133.900" stroke="#c4aa28" stroke-width="2" stroke-linecap="round"/><ellipse cx="54.900" cy="129.600" rx="3.500" ry="4.200" fill="url(#gball)" transform="rotate(-35 54.900 129.600)"/></g>
<!-- table frame icon -->
<g stroke="#e6e6e6" stroke-width="1.3" fill="none" stroke-linecap="round"><path d="M34.6 145V154.3L26 156.2M34.6 154.3L39 157"/></g>
<circle cx="28.4" cy="148.6" r="3.6" fill="url(#gball)"/>
<!-- target icon home -->
<g><path d="M46 168L52.5 161.5" stroke="#ddd" stroke-width="1.2"/><circle cx="52.3" cy="161.8" r="1.3" fill="#f4f4f4"/><ellipse cx="43.6" cy="169.4" rx="5.3" ry="4.6" fill="#8d8d86"/><ellipse cx="43.6" cy="169.2" rx="3.4" ry="3" fill="none" stroke="#e3e3dc" stroke-width="1.1"/><circle cx="43.8" cy="169.2" r="1.1" fill="#e3e3dc"/></g>
<!-- cube icon -->
<g><path d="M39 183.5L44.5 179.3L52.5 180.5L47.5 184.8Z" fill="#bfe6ff"/><path d="M39 183.5L47.5 184.8V192.6L39 190.6Z" fill="#56aef5"/><path d="M47.5 184.8L52.5 180.5V188.3L47.5 192.6Z" fill="#1f78d8"/></g>
<!-- world axes -->
<g stroke-width="1.3" fill="none" stroke-linecap="round"><path d="M34.6 198V208.3" stroke="#3a41e0"/><path d="M34.6 208.3L26 210.2" stroke="#e04a4a"/><path d="M34.6 208.3L39 211" stroke="#3fc46a"/></g>
<!-- Go_Home doc -->
<path d="M26.3 215.4H34.5L38 218.6V228.6H26.3Z" fill="#ecebe7"/><path d="M26.3 215.4H34.5L35.6 216.5H26.3Z" fill="#c9bff0"/><path d="M28.3 219.5H35.5V227H28.3Z" fill="#d2d1cc"/>
<!-- settings icon -->
<g><path d="M25 233.5H38.5L35 236.5H28.5Z" fill="#3c3c3c"/><path d="M29 236.5H34.5L33.5 240.5H30Z" fill="#9a9a9a"/><circle cx="29" cy="244" r="3.2" fill="none" stroke="#4aa3ee" stroke-width="1.8"/><path d="M32 239.5H35.5V248H32Z" fill="#e9e9e9"/></g>
<!-- Weld doc + warning -->
<path d="M26.3 251.4H34.5L38 254.6V264.6H26.3Z" fill="#ecebe7"/><path d="M26.3 251.4H34.5L35.6 252.5H26.3Z" fill="#c9bff0"/><path d="M28.3 255.5H35.5V261H28.3Z" fill="#d8d7d2"/>
<path d="M35 257.5L39.8 265H30.2Z" fill="#f5b21a"/><path d="M35 260V262.6M35 263.3V264.2" stroke="#3a2a00" stroke-width="1"/>
</svg>
<div class="tree" style="left:30.8px;top:69.8px">Ex 01 - Fanuc Welding Station</div>
<div class="tree" style="left:44px;top:87.8px">Fanuc ARC Mate 120iB/10L Base</div>
<div class="tree" style="left:57.5px;top:105.8px">Fanuc ARC Mate 120iB/10L</div>
<div class="tree" style="left:70.6px;top:123.8px">Daihen OTC weld gun</div>
<div class="tree" style="left:44px;top:141.8px">Table</div>
<div class="tree" style="left:57.5px;top:159.8px">Home</div>
<div class="tree" style="left:57.5px;top:177.8px">Weld 1</div>
<div class="tree" style="left:44px;top:195.8px">World</div>
<div class="tree" style="left:44px;top:213.8px">Go_Home</div>
<div class="tree" style="left:44px;top:231.8px">Weld 1 Settings</div>
<div class="tree" style="left:44px;top:249.8px">Weld</div>
<!--/TREE-->
<div id="bottombar"></div>
<!--BOTTOM-->
<svg class="abs" style="left:0;top:650px" width="1249" height="22" viewBox="0 650 1249 22">
<defs><linearGradient id="bB" x1="0" y1="0" x2="0" y2="1"><stop offset="0" stop-color="#7cc8fa"/><stop offset="1" stop-color="#1e8fe6"/></linearGradient></defs>
<g fill="#e6e6e6" stroke="#b9b9b9" stroke-width=".8"><rect x="-6" y="655.300" width="17.400" height="14.200"/><rect x="15.400" y="655.300" width="17.400" height="14.200"/><rect x="36.200" y="655.300" width="16.700" height="14.200"/><rect x="56.700" y="655.300" width="17.200" height="14.200"/><rect x="77.200" y="655.300" width="17.300" height="14.200"/><rect x="98" y="655.300" width="17" height="14.200"/></g>
<g fill="url(#bB)"><path d="M6.800 659L1.500 662.600L6.800 666.200Z"/><rect x="0" y="659" width="1.400" height="7.200"/>
<rect x="20.300" y="658.200" width="2.600" height="8.200"/><rect x="24.800" y="658.200" width="2.600" height="8.200"/>
<path d="M42 658.600L48.300 662.700L42 666.800Z"/>
<path d="M60.300 659.600L65 662.700L60.300 665.800ZM65 659.600L69.700 662.700L65 665.800Z"/>
<path d="M82.500 659L87.600 662.600L82.500 666.200Z"/><rect x="87.800" y="659" width="1.500" height="7.200"/></g>
<path d="M102.500 663.500C103.500 659.500 108 659 109.800 662.500L111.300 661.800L110 665.800L106.500 663.800L108 663.200C107 661.200 104.500 661.500 104.200 663.800Z" fill="#2a78c8" stroke="#2a78c8" stroke-width=".6"/>
<path d="M118 661.500H1141" stroke="#d6d6d6" stroke-width="1.300"/><path d="M118 662.600H1141" stroke="#fcfcfc" stroke-width=".8"/>
<rect x="883.700" y="655" width="7.100" height="13.800" fill="#0078d7"/>
<rect x="1144.500" y="655.500" width="32.500" height="13.100" fill="#fff" stroke="#9a9a9a" stroke-width=".8"/>
<rect x="1167.600" y="656" width="9" height="12.200" fill="#e4e4e4"/>
<path d="M1170.200 661L1172.200 658.300L1174.200 661ZM1170.200 663.500L1172.200 666.200L1174.200 663.500Z" fill="#222"/>
</svg>
<div class="abs" style="left:1147.300px;top:658.600px;font-size:7.300px;line-height:10px;color:#111">2171</div>
<div class="abs" style="left:1179.700px;top:658.600px;font-size:7.300px;line-height:10px;color:#111;white-space:nowrap"><b style="font-size:7.600px">Weld</b> time: 14.7s</div>
<!--/BOTTOM-->
<div id="dlg"><div id="dlgtitle"></div>
</div>
<!--DLGC-->
<div id="dc">
<!-- title -->
<svg class="abs" style="left:864px;top:134px" width="13" height="13" viewBox="864 134 13 13"><path d="M865 135.300H875.800L872.300 138.600V144.300L870.400 145.700L868.500 144.300V138.600Z" fill="#444"/><path d="M869.400 136.800V143.500M871.400 136.800V143.500" stroke="#ddd" stroke-width=".6"/></svg>
<div class="l" style="left:879.700px;top:135.600px;font-size:7.750px;color:#000">Curve Follow Project: Weld 1 Settings</div>
<svg class="abs" style="left:1140px;top:132px" width="84" height="16" viewBox="1140 132 84 16"><path d="M1147.900 140.400H1155.100" stroke="#222" stroke-width=".9"/><rect x="1178.200" y="137.300" width="6.400" height="6.200" fill="none" stroke="#222" stroke-width=".9"/><path d="M1208.400 137.200L1215.500 143.700M1215.500 137.200L1208.400 143.700" stroke="#222" stroke-width=".9"/></svg>
<!-- left column -->
<div class="l" style="left:868.600px;top:161.300px">Robot:</div>
<div class="l" style="left:868.600px;top:176.800px">Reference:</div>
<div class="l" style="left:868.600px;top:191.900px">Tool:</div>
<div class="l" style="left:868.600px;top:204.200px">Object:</div><div class="l" style="left:905.500px;top:204.200px">Weld 1</div>
<div class="l" style="left:868.600px;top:213.400px">Program:</div><div class="l" style="left:905.500px;top:213.400px">Weld</div>
<div class="cb" style="left:906.100px;top:158.200px;width:117px;height:14.400px;padding-left:15px">Fanuc ARC Mate 120iB/10L</div>
<div class="cb" style="left:906.100px;top:174.200px;width:117px;height:14.200px;padding-left:15px">Table</div>
<div class="cb" style="left:906.100px;top:189.300px;width:117px;height:14.400px;padding-left:15px">Daihen OTC weld gun</div>
<svg class="abs" style="left:908px;top:159px" width="14" height="46" viewBox="908 159 14 46">
<g stroke="#e06a28" stroke-width="1.700" fill="none" stroke-linecap="round" stroke-linejoin="round"><path d="M911 161.800H918.500L913.800 165.500C913 167.500 914.500 169 917.500 168.500"/></g><path d="M912.500 170.700H918.500" stroke="#3a1a10" stroke-width="1.600"/>
<circle cx="912.500" cy="179.800" r="2.700" fill="#3fc22a"/><circle cx="911.800" cy="179" r="1" fill="#b8f59a"/><path d="M917.200 177V184.500L910 186M917.200 184.500L920.500 186.500" stroke="#555" stroke-width=".9" fill="none"/>
<path d="M912.500 195L919 200" stroke="#b08a1a" stroke-width="1.500" stroke-linecap="round"/><path d="M914 193L920 197" stroke="#b08a1a" stroke-width="1.500" stroke-linecap="round"/><ellipse cx="911.800" cy="194" rx="2.400" ry="3" fill="#3fc22a" transform="rotate(-35 911.800 194)"/>
</svg>
<div class="ck" style="left:869.500px;top:251.500px"></div><div class="l" style="left:880.900px;top:250.600px">Visible toolpath</div>
<div class="gb" style="left:870.100px;top:266.300px;width:153px;height:59px"></div><div class="gl" style="left:873.100px;top:262px">Path input</div>
<div class="cb" style="left:873.300px;top:275.200px;width:71.300px;height:14.200px">Select curve</div>
<div class="btn" style="left:948.700px;top:274.800px;width:70.200px;height:14.800px">Select curve</div>
<div class="l" style="left:872.700px;top:293.200px">Path points: 87</div>
<div class="btn" style="left:874.200px;top:306px;width:144.500px;height:14.200px">Program Events</div>
<!-- right column -->
<div class="ck" style="left:1049.600px;top:161.900px"></div><div class="l" style="left:1061px;top:161.300px">Aproach/Retract each curve</div>
<div class="l" style="left:1048.700px;top:174.600px">Operation speed (mm/s)</div>
<div class="sp" style="left:1135.100px;top:172.300px;width:85px;height:13.400px">50.000<i class="u"></i><i class="d"></i></div>
<div class="l" style="left:1048.700px;top:188.500px">Join Curve Tolerance (mm)</div>
<div class="sp" style="left:1135.100px;top:186.600px;width:85px;height:13.200px">0.500<i class="u"></i><i class="d"></i></div>
<div class="l" style="left:1050.900px;top:203.300px">Approach</div>
<div class="btn" style="left:1107.400px;top:201.300px;width:53.900px;height:13.400px">Add</div>
<div class="btn" style="left:1163.200px;top:201.300px;width:53.900px;height:13.400px">Remove</div>
<div class="le" style="left:1049.600px;top:216.200px;width:170.400px;height:46px;padding:0"></div>
<div class="l" style="left:1050.300px;top:219.400px;width:66px;text-align:center;font-weight:bold;font-size:7.950px">mode</div>
<div class="l" style="left:1117.100px;top:219.400px;width:46.700px;text-align:center;font-weight:bold;font-size:7.950px">value (mm)</div>
<div class="cb" style="left:1050.300px;top:231.600px;width:66.300px;height:15px;font-size:8.200px;padding-left:2.200px">normal (n+)</div>
<div class="l" style="left:1117.100px;top:234.500px;width:46.700px;text-align:center">100</div>
<div class="cb" style="left:1050.300px;top:247.400px;width:66.300px;height:14.600px;white-space:pre;font-size:8.200px;padding-left:2.200px">[   0,   0, +Z]</div>
<div class="l" style="left:1117.100px;top:246.800px;width:46.700px;height:14.900px;line-height:15.500px;margin-top:0;text-align:center;background:#0078d7;color:#fff">50</div>
<div class="l" style="left:1050.900px;top:266.700px">Retract</div>
<div class="btn hot" style="left:1107.400px;top:264.700px;width:53.900px;height:13.600px">Add</div>
<div class="btn" style="left:1163.200px;top:264.700px;width:53.900px;height:13.600px">Remove</div>
<div class="le" style="left:1049.600px;top:279.600px;width:170.400px;height:46.500px;padding:0"></div>
<div class="abs" style="left:1050.300px;top:280.300px;width:113.500px;height:14.400px;background:#cce4f7"></div>
<div class="l" style="left:1050.300px;top:282.400px;width:66px;text-align:center;font-weight:bold;font-size:7.950px">mode</div>
<div class="l" style="left:1117.100px;top:282.400px;width:46.700px;text-align:center;font-weight:bold;font-size:7.950px">value (mm)</div>
<div class="cb" style="left:1050.300px;top:295.400px;width:66.300px;height:14.400px;font-size:8.200px;padding-left:2.200px">normal (n+)</div>
<div class="l" style="left:1117.100px;top:296px;width:46.700px;height:13.900px;line-height:13.900px;text-align:center;background:#f0f0f0">100</div>
<svg class="abs" style="left:1127px;top:271px" width="14" height="20" viewBox="1127 271 14 20"><path d="M1129.300 272.500V284.500L1132.100 282L1134.100 286.800L1136.100 286L1134.100 281.300H1137.800Z" fill="#fff" stroke="#111" stroke-width=".8" stroke-linejoin="round"/></svg>
<!-- path to tool offset -->
<div class="l" style="left:866.700px;top:341.100px;letter-spacing:.14px">Path to tool offset:</div>
<div class="cb mono" style="left:930.700px;top:331.900px;width:227px;height:12.800px">[X,Y,Z]mm | Rot[X,Y ,Z  ]deg - Fanuc/Motoman (default</div>
<div class="le mono" style="left:930.700px;top:346.500px;width:289.300px;height:12.900px">rotz(0)</div>
<div class="l" style="left:866.700px;top:365.100px">Select algorithm:</div>
<div class="cb" style="left:922.800px;top:363.500px;width:120px;height:12.900px">Minimum tool orientation change</div>
<div class="btn" style="left:1045.500px;top:362.900px;width:48.300px;height:13.200px">Teach</div>
<div class="btn hot" style="left:1097.300px;top:362.200px;width:17.600px;height:14.800px"><span style="display:block;width:9.500px;height:3px;background:#e03a3a;border-radius:.5px"></span></div>
<div class="btn" style="left:1121.600px;top:362.900px;width:97.100px;height:13.500px;justify-content:flex-start;padding-left:13.800px">Show preferred tool path</div><div class="rd" style="left:1124.500px;top:366.100px"></div>
<div class="gb" style="left:867.600px;top:386.200px;width:352.400px;height:32.200px"></div><div class="gl" style="left:870.900px;top:381.200px">Preferred orientation</div>
<div class="l" style="left:873.600px;top:400.800px">Preferred tool X axis</div>
<div class="sp r" style="left:943.300px;top:399.100px;width:57.400px;height:12.200px;background:#f7a3a3;border-color:#f7a3a3;padding-right:13.200px">0.00 deg<i class="u"></i><i class="d"></i></div>
<div class="sp r" style="left:1002px;top:399.100px;width:57.400px;height:12.200px;background:#a3eba3;border-color:#a3eba3;padding-right:13.200px">0.00 deg<i class="u"></i><i class="d"></i></div>
<div class="btn" style="left:1103.600px;top:398.200px;width:24.900px;height:13.600px">-X</div>
<div class="btn" style="left:1134.200px;top:398.200px;width:25.200px;height:13.600px">+Z</div>
<div class="btn" style="left:1164.800px;top:398.200px;width:24.900px;height:13.600px">Def.</div>
<svg class="abs" style="left:1197px;top:399px" width="13" height="13" viewBox="1197 399 13 13"><path d="M1203.600 400.200V410.200M1198.600 405.200H1208.600" stroke="#1b74d8" stroke-width="2"/></svg>
<div class="l" style="left:867.600px;top:434.800px">Frame offset:</div>
<div class="cb mono" style="left:912.700px;top:426px;width:244.500px;height:12.700px">[X,Y,Z]mm | Rot[X,Y ,Z  ]deg - Fanuc/Motoman (default)</div>
<div class="le mono" style="left:912.700px;top:440.800px;width:306.700px;height:12.700px">rotZ(0)</div>
<div class="l" style="left:867.600px;top:464.800px">Tool offset:</div>
<div class="cb mono" style="left:912.700px;top:455.900px;width:244.500px;height:12.900px">[X,Y,Z]mm | Rot[X,Y ,Z  ]deg - Fanuc/Motoman (default)</div>
<div class="le mono" style="left:912.700px;top:470.700px;width:306.700px;height:12.700px">rotX(0)*rotY(0)</div>
<!-- optimization -->
<div class="gb" style="left:867.600px;top:493.200px;width:352.400px;height:49px"></div><div class="gl" style="left:871.500px;top:488.100px">Optimization parameters</div>
<div class="btn" style="left:874.600px;top:504.600px;width:48.500px;height:13.900px">Set default</div>
<div class="btn" style="left:1114.300px;top:504.600px;width:98.400px;height:14.200px;justify-content:flex-start;padding-left:13.800px">Show estimated tool path</div><div class="rd" style="left:1117.200px;top:507.900px"></div>
<div class="l" style="left:873.900px;top:525.800px">Allow a tool Z rotation of +/-</div>
<div class="sp" style="left:969.200px;top:524.200px;width:39.400px;height:12.900px;padding-left:2.500px">180.00<i class="u"></i><i class="d"></i></div>
<div class="l" style="left:1012.100px;top:525.800px">deg by steps of</div>
<div class="sp" style="left:1067px;top:524.200px;width:38.800px;height:12.900px;padding-left:6px">20.00<i class="u"></i><i class="d"></i></div>
<div class="l" style="left:1109.900px;top:525.800px">deg</div>
<!-- joints -->
<div class="gb" style="left:867.600px;top:552.200px;width:352.400px;height:51.800px"></div><div class="gl" style="left:871.200px;top:547.200px">Preferred joints for the start point</div>
<div class="sp" style="left:873.900px;top:563.900px;width:48.300px;height:13.900px;padding-left:1.400px">0.0000<i class="u"></i><i class="d"></i></div>
<div class="sp" style="left:924.700px;top:563.900px;width:47px;height:13.900px;padding-left:1.400px">0.0000<i class="u"></i><i class="d"></i></div>
<div class="sp" style="left:973.300px;top:563.900px;width:47.900px;height:13.900px;padding-left:1.400px">0.0000<i class="u"></i><i class="d"></i></div>
<div class="sp" style="left:1023.800px;top:563.900px;width:48.200px;height:13.900px;padding-left:1.400px">0.0000<i class="u"></i><i class="d"></i></div>
<div class="sp" style="left:1074.600px;top:563.900px;width:47.900px;height:13.900px;padding-left:1.400px">0.0000<i class="u"></i><i class="d"></i></div>
<div class="sp" style="left:1125px;top:563.900px;width:48.600px;height:13.900px;padding-left:1.400px">0.0000<i class="u"></i><i class="d"></i></div>
<div class="btn" style="left:874.600px;top:584.100px;width:48.200px;height:13.900px">Set default</div>
<div class="btn" style="left:925px;top:584.100px;width:48px;height:13.900px">Set current</div>
<div class="cb mono" style="left:974.200px;top:584.100px;width:238.800px;height:13.300px;padding-left:9.500px;white-space:pre">-18.5,     6.1,   -48.8,     0.0,   -41.2,   -71.5</div>
<div class="ib" style="left:1161.1px;top:331.4px;width:16.7px;height:13.6px"></div><svg class="abs" style="left:1164.4px;top:333.2px" width="10" height="10" viewBox="0 0 10 10"><path d="M1.800 1.300H8.200V7L6.600 8.700H1.800Z" fill="#ececec" stroke="#cfcfcf" stroke-width=".7"/><path d="M3.300 3.600H6.800M3.300 5.200H6.800" stroke="#d0d0d0" stroke-width=".7"/></svg><div class="ib" style="left:1181.3px;top:331.4px;width:17.2px;height:13.6px"></div><svg class="abs" style="left:1184.9px;top:332.7px" width="10" height="11" viewBox="0 0 10 11"><path d="M1.200 1.700H6.800V9.800H1.200Z" fill="#d98e3a"/><path d="M2.800 1H5.200V2.500H2.800Z" fill="#b9b9b9"/><path d="M3.300 3.400H7.600L9 4.800V10.200H3.300Z" fill="#fbfbfb" stroke="#d8d8d8" stroke-width=".4"/></svg><div class="ib" style="left:1202.4px;top:331.4px;width:16.6px;height:13.6px"></div><svg class="abs" style="left:1205.7px;top:333.2px" width="10" height="10" viewBox="0 0 10 10"><path d="M.800 1.900H9.200M.800 5H9.200M.800 8.100H9.200" stroke="#111" stroke-width="1.500"/></svg>
<div class="ib" style="left:1161.1px;top:425.1px;width:16.7px;height:13.9px"></div><svg class="abs" style="left:1164.4px;top:427.1px" width="10" height="10" viewBox="0 0 10 10"><path d="M1.800 1.300H8.200V7L6.600 8.700H1.800Z" fill="#ececec" stroke="#cfcfcf" stroke-width=".7"/><path d="M3.300 3.600H6.800M3.300 5.200H6.800" stroke="#d0d0d0" stroke-width=".7"/></svg><div class="ib" style="left:1181.3px;top:425.1px;width:17.2px;height:13.9px"></div><svg class="abs" style="left:1184.9px;top:426.6px" width="10" height="11" viewBox="0 0 10 11"><path d="M1.200 1.700H6.800V9.800H1.200Z" fill="#d98e3a"/><path d="M2.800 1H5.200V2.500H2.800Z" fill="#b9b9b9"/><path d="M3.300 3.400H7.600L9 4.800V10.200H3.300Z" fill="#fbfbfb" stroke="#d8d8d8" stroke-width=".4"/></svg><div class="ib" style="left:1202.4px;top:425.1px;width:16.6px;height:13.9px"></div><svg class="abs" style="left:1205.7px;top:427.1px" width="10" height="10" viewBox="0 0 10 10"><path d="M.800 1.900H9.200M.800 5H9.200M.800 8.100H9.200" stroke="#111" stroke-width="1.500"/></svg>
<div class="ib" style="left:1161.1px;top:455.1px;width:16.7px;height:13.9px"></div><svg class="abs" style="left:1164.4px;top:457.1px" width="10" height="10" viewBox="0 0 10 10"><path d="M1.800 1.300H8.200V7L6.600 8.700H1.800Z" fill="#ececec" stroke="#cfcfcf" stroke-width=".7"/><path d="M3.300 3.600H6.800M3.300 5.200H6.800" stroke="#d0d0d0" stroke-width=".7"/></svg><div class="ib" style="left:1181.3px;top:455.1px;width:17.2px;height:13.9px"></div><svg class="abs" style="left:1184.9px;top:456.6px" width="10" height="11" viewBox="0 0 10 11"><path d="M1.200 1.700H6.800V9.800H1.200Z" fill="#d98e3a"/><path d="M2.800 1H5.200V2.500H2.800Z" fill="#b9b9b9"/><path d="M3.300 3.400H7.600L9 4.800V10.200H3.300Z" fill="#fbfbfb" stroke="#d8d8d8" stroke-width=".4"/></svg><div class="ib" style="left:1202.4px;top:455.1px;width:16.6px;height:13.9px"></div><svg class="abs" style="left:1205.7px;top:457.1px" width="10" height="10" viewBox="0 0 10 10"><path d="M.800 1.900H9.200M.800 5H9.200M.800 8.100H9.200" stroke="#111" stroke-width="1.500"/></svg>
<div class="ib" style="left:1061.6px;top:398.2px;width:16.7px;height:14.2px"></div><svg class="abs" style="left:1064.9px;top:400.3px" width="10" height="10" viewBox="0 0 10 10"><path d="M1.800 1.300H8.200V7L6.600 8.700H1.800Z" fill="#ececec" stroke="#cfcfcf" stroke-width=".7"/><path d="M3.300 3.600H6.800M3.300 5.200H6.800" stroke="#d0d0d0" stroke-width=".7"/></svg><div class="ib" style="left:1080.6px;top:398.2px;width:16.7px;height:14.2px"></div><svg class="abs" style="left:1083.9px;top:399.8px" width="10" height="11" viewBox="0 0 10 11"><path d="M1.200 1.700H6.800V9.800H1.200Z" fill="#d98e3a"/><path d="M2.800 1H5.200V2.500H2.800Z" fill="#b9b9b9"/><path d="M3.300 3.400H7.600L9 4.800V10.200H3.300Z" fill="#fbfbfb" stroke="#d8d8d8" stroke-width=".4"/></svg>
<div class="ib" style="left:1176.1px;top:563.9px;width:17.1px;height:14.5px"></div><svg class="abs" style="left:1179.6px;top:566.1px" width="10" height="10" viewBox="0 0 10 10"><path d="M1.800 1.300H8.200V7L6.600 8.700H1.800Z" fill="#ececec" stroke="#cfcfcf" stroke-width=".7"/><path d="M3.300 3.600H6.800M3.300 5.200H6.800" stroke="#d0d0d0" stroke-width=".7"/></svg><div class="ib" style="left:1195.7px;top:563.9px;width:16.7px;height:14.5px"></div><svg class="abs" style="left:1199.0px;top:565.6px" width="10" height="11" viewBox="0 0 10 11"><path d="M1.200 1.700H6.800V9.800H1.200Z" fill="#d98e3a"/><path d="M2.800 1H5.200V2.500H2.800Z" fill="#b9b9b9"/><path d="M3.300 3.400H7.600L9 4.800V10.200H3.300Z" fill="#fbfbfb" stroke="#d8d8d8" stroke-width=".4"/></svg>
<svg class="abs" style="left:1078px;top:608px" width="36" height="36" viewBox="1078 608 36 36"><defs><linearGradient id="hq" x1="0" y1="0" x2="1" y2="1"><stop offset="0" stop-color="#1b62c4"/><stop offset=".6" stop-color="#62abe8"/><stop offset="1" stop-color="#a8d8f8"/></linearGradient><radialGradient id="hg" cx=".4" cy=".35" r=".7"><stop offset="0" stop-color="#6fe070"/><stop offset="1" stop-color="#12a02a"/></radialGradient></defs>
<circle cx="1095.700" cy="625.700" r="13.500" fill="#f4f7fb" stroke="url(#hq)" stroke-width="2.200"/>
<text x="1088.800" y="636.300" font-family="Liberation Sans,sans-serif" font-size="26" fill="#3f8fdc" stroke="#3f8fdc" stroke-width=".5">?</text>
<circle cx="1105" cy="634.600" r="6.900" fill="url(#hg)"/><path d="M1101 634.600L1103.800 637.600L1109 630.800" stroke="#fff" stroke-width="2.200" fill="none"/></svg>
<div class="ck" style="left:867.600px;top:612.200px"></div><div class="l" style="left:879px;top:611.300px">auto update</div>
<div class="l" style="left:867px;top:625.500px">All targets are reachable.</div>
<div class="l" style="left:867px;top:634.300px">Check path.</div>
<div class="btn" style="left:1116.800px;top:611.500px;width:48.600px;height:30.300px">Update</div>
<div class="btn" style="left:1170.800px;top:611.500px;width:48.600px;height:30.300px">Simulate</div>
</div>
<!--/DLGC-->
</body></html>
